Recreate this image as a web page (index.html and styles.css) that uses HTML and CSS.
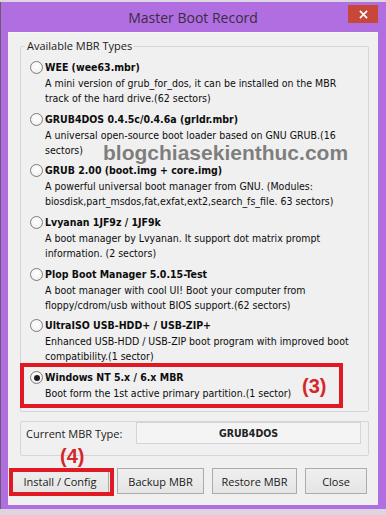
FILE: index.html
```html
<!DOCTYPE html>
<html>
<head>
<meta charset="utf-8">
<link rel="stylesheet" href="styles.css">
</head>
<body>
<div class="window">
  <div class="titlebar">
    <span class="title">Master Boot Record</span>
    <span class="close"><svg width="9" height="9" viewBox="0 0 10 10"><path d="M1 1L9 9M9 1L1 9" stroke="#fff" stroke-width="1.8" fill="none"/></svg></span>
  </div>
  <div class="client">
    <fieldset class="group types">
      <legend>Available MBR Types</legend>
      <div class="opt">
        <span class="radio"></span>
        <div class="opt-text"><div class="opt-title">WEE (wee63.mbr)</div><div class="opt-desc">A mini version of grub_for_dos, it can be installed on the MBR<br>track of the hard drive.(62 sectors)</div></div>
      </div>
      <div class="opt">
        <span class="radio"></span>
        <div class="opt-text"><div class="opt-title">GRUB4DOS 0.4.5c/0.4.6a (grldr.mbr)</div><div class="opt-desc">A universal open-source boot loader based on GNU GRUB.(16<br>sectors)</div></div>
      </div>
      <div class="opt">
        <span class="radio"></span>
        <div class="opt-text"><div class="opt-title">GRUB 2.00 (boot.img + core.img)</div><div class="opt-desc">A powerful universal boot manager from GNU. (Modules:<br>biosdisk,part_msdos,fat,exfat,ext2,search_fs_file. 63 sectors)</div></div>
      </div>
      <div class="opt">
        <span class="radio"></span>
        <div class="opt-text"><div class="opt-title">Lvyanan 1JF9z / 1JF9k</div><div class="opt-desc">A boot manager by Lvyanan. It support dot matrix prompt<br>information. (2 sectors)</div></div>
      </div>
      <div class="opt">
        <span class="radio"></span>
        <div class="opt-text"><div class="opt-title">Plop Boot Manager 5.0.15-Test</div><div class="opt-desc">A boot manager with cool UI! Boot your computer from<br>floppy/cdrom/usb without BIOS support.(62 sectors)</div></div>
      </div>
      <div class="opt">
        <span class="radio"></span>
        <div class="opt-text"><div class="opt-title">UltraISO USB-HDD+ / USB-ZIP+</div><div class="opt-desc">Enhanced USB-HDD / USB-ZIP boot program with improved boot<br>compatibility.(1 sector)</div></div>
      </div>
      <div class="opt selected">
        <span class="radio checked"></span>
        <div class="opt-text"><div class="opt-title">Windows NT 5.x / 6.x MBR</div><div class="opt-desc">Boot form the 1st active primary partition.(1 sector)</div></div>
        <span class="mark-box"></span>
        <span class="mark mark3">(3)</span>
      </div>
      <div class="watermark">blogchiasekienthuc.com</div>
    </fieldset>
    <fieldset class="group current">
      <span class="cur-label">Current MBR Type:</span>
      <span class="cur-field">GRUB4DOS</span>
    </fieldset>
    <div class="buttons">
      <span class="mark mark4">(4)</span>
      <button class="btn btn-install">Install / Config<span class="mark-box4"></span></button>
      <button class="btn">Backup MBR</button>
      <button class="btn">Restore MBR</button>
      <button class="btn">Close</button>
    </div>
  </div>
</div>
</body>
</html>
```
FILE: styles.css
```css
* { box-sizing: border-box; }
html, body { margin: 0; padding: 0; }
body {
  background: #ddd6e2;
  width: 386px;
  height: 515px;
  overflow: hidden;
}
.window {
  margin-top: 2px;
  width: 386px;
  height: 507px;
  background: #b16ee0;
  border-left: 1px solid #6a5a72;
  padding: 0 8px 4px 7px;
  display: flex;
  flex-direction: column;
}
.titlebar {
  position: relative;
  height: 30px;
  display: flex;
  align-items: center;
  justify-content: center;
}
.title {
  font-family: "Open Sans", "Noto Sans", sans-serif;
  font-size: 14px;
  color: #3a2c45;
  margin-top: 1px;
}
.close {
  position: absolute;
  top: 3px;
  right: 0;
  width: 30px;
  height: 18px;
  background: #c8473b;
  display: flex;
  align-items: center;
  justify-content: center;
}
.close svg { display: block; }
.client {
  flex: 1;
  background: #f0f0f0;
  border-top: 1px solid #f7f7f7;
  display: flex;
  flex-direction: column;
  padding: 0 9px 0 12px;
}
.group {
  margin: 0;
  border: 1px solid #d6d6d6;
  border-radius: 2px;
  min-width: 0;
}
.types {
  position: relative;
  margin-top: 6px;
  padding: 6px 0 10px 9px;
}
.types legend {
  font-family: "Open Sans", "Noto Sans", sans-serif;
  font-size: 11px;
  line-height: 14px;
  color: #1a1a1a;
  padding: 0 2px;
  margin-left: -5px;
}
.opt {
  position: relative;
  display: flex;
  align-items: flex-start;
  margin-bottom: 4.7px;
}
.opt.selected { margin-bottom: 0; }
.radio {
  flex: none;
  width: 13px;
  height: 13px;
  margin-top: 2px;
  margin-right: 2px;
  border-radius: 50%;
  border: 1px solid #7d7d7d;
  background: radial-gradient(circle at 50% 40%, #ffffff 0%, #f4f4f4 60%, #dcdcdc 100%);
  position: relative;
}
.radio.checked::after {
  content: "";
  position: absolute;
  left: 2.5px;
  top: 2.5px;
  width: 6px;
  height: 6px;
  border-radius: 50%;
  background: #1b1b1b;
}
.opt-text {
  font-family: "DejaVu Sans Condensed", "DejaVu Sans", sans-serif;
  font-stretch: condensed;
  color: #0d0d0d;
}
.opt-title {
  font-weight: bold;
  font-size: 10.5px;
  line-height: 17px;
}
.opt-desc {
  font-size: 10.5px;
  line-height: 15px;
  white-space: nowrap;
}
.mark-box {
  position: absolute;
  left: -10px;
  top: -6px;
  width: 323px;
  height: 45px;
  border: 4px solid #e01a22;
}
.mark {
  position: absolute;
  font-family: "Liberation Sans", Arial, sans-serif;
  font-weight: bold;
  font-size: 20px;
  line-height: 22px;
  color: #d7262b;
}
.mark3 {
  left: 272px;
  top: 6px;
}
.watermark {
  position: absolute;
  left: 82px;
  top: 88px;
  font-family: "Liberation Sans", Arial, sans-serif;
  font-weight: bold;
  font-size: 21px;
  color: rgba(105, 105, 105, 0.85);
  white-space: nowrap;
  pointer-events: none;
}
.current {
  margin-top: 9px;
  height: 35px;
  padding: 0 7px 0 5px;
  display: flex;
  align-items: center;
  justify-content: space-between;
}
.cur-label {
  font-family: "Open Sans", "Noto Sans", sans-serif;
  font-size: 11px;
  color: #1a1a1a;
}
.cur-field {
  width: 225px;
  height: 22px;
  border: 1px solid #d4d4d4;
  background: #f4f4f4;
  display: flex;
  align-items: center;
  justify-content: center;
  font-family: "DejaVu Sans Condensed", "DejaVu Sans", sans-serif;
  font-stretch: condensed;
  font-weight: bold;
  font-size: 10.5px;
  color: #222;
}
.buttons {
  position: relative;
  margin-top: 12px;
  margin-left: -9px;
  display: flex;
  gap: 8px;
  padding-left: 0;
}
.btn {
  position: relative;
  height: 26px;
  border: 1px solid #acacac;
  background: linear-gradient(#efefef, #e5e5e5);
  font-family: "Open Sans", "Noto Sans", sans-serif;
  font-size: 11px;
  color: #1a1a1a;
  padding: 0;
}
.btn:nth-of-type(1) { width: 98px; }
.btn:nth-of-type(2) { width: 87px; }
.btn:nth-of-type(3) { width: 85px; }
.btn:nth-of-type(4) { width: 62px; }
.mark-box4 {
  position: absolute;
  left: -3px;
  top: -1px;
  width: 105px;
  height: 28px;
  border: 4px solid #e01a22;
}
.mark4 {
  left: 49px;
  top: -23px;
}
```
